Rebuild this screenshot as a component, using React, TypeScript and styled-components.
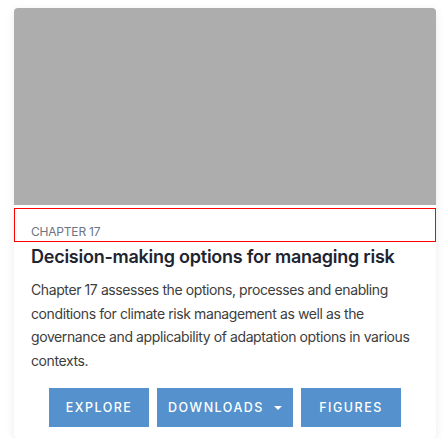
import React from 'react';
import styled, { createGlobalStyle } from 'styled-components';

const GlobalStyle = createGlobalStyle`
  body {
    margin: 0;
    background: #ffffff;
    font-family: Inter, "Liberation Sans", Arial, sans-serif;
  }
`;

const Page = styled.div`
  padding: 8px 12px 0 14px;
`;

const Card = styled.div`
  background: #ffffff;
  border-radius: 4px;
  box-shadow: 0 2px 10px rgba(0, 0, 0, 0.08);
  padding-bottom: 11px;
`;

const Cover = styled.div`
  height: 197px;
  background: #adadad;
  border-radius: 4px 4px 0 0;
`;

const LabelBox = styled.div`
  margin-top: 3px;
  height: 34px;
  box-sizing: border-box;
  border: 1px solid #ff0000;
  padding: 16px 16px 0;
`;

const Chapter = styled.div`
  font-size: 12px;
  line-height: 13px;
  letter-spacing: -0.2px;
  color: #6b7584;
  text-transform: uppercase;
`;

const Body = styled.div`
  padding: 0 17px;
`;

const Title = styled.h2`
  margin: 3px 0 0;
  font-size: 18px;
  line-height: 24px;
  font-weight: 600;
  letter-spacing: -0.25px;
  color: #1e2430;
`;

const Summary = styled.p`
  margin: 9px 0 0;
  font-size: 14px;
  line-height: 23.5px;
  letter-spacing: -0.4px;
  color: #3d3d3d;
`;

const Actions = styled.div`
  display: flex;
  gap: 8px;
  margin-top: 16px;
  padding-left: 35px;
`;

const Button = styled.button<{ width: number }>`
  width: ${props => props.width}px;
  height: 39px;
  border: none;
  background: #5591cc;
  color: #ffffff;
  font-family: inherit;
  font-size: 12.5px;
  font-weight: 500;
  letter-spacing: 1.5px;
  text-transform: uppercase;
  display: flex;
  align-items: center;
  justify-content: center;
  gap: 10px;
  padding: 0;
`;

const Caret = styled.span`
  width: 0;
  height: 0;
  border-left: 4px solid transparent;
  border-right: 4px solid transparent;
  border-top: 4px solid #ffffff;
`;

export default function App() {
  return (
    <Page>
      <GlobalStyle />
      <Card>
        <Cover />
        <LabelBox>
          <Chapter>Chapter 17</Chapter>
        </LabelBox>
        <Body>
          <Title>Decision-making options for managing risk</Title>
          <Summary>
            Chapter 17 assesses the options, processes and enabling conditions for climate risk
            management as well as the governance and applicability of adaptation options in various
            contexts.
          </Summary>
        </Body>
        <Actions>
          <Button width={100}>Explore</Button>
          <Button width={136}>
            Downloads <Caret />
          </Button>
          <Button width={100}>Figures</Button>
        </Actions>
      </Card>
    </Page>
  );
}
